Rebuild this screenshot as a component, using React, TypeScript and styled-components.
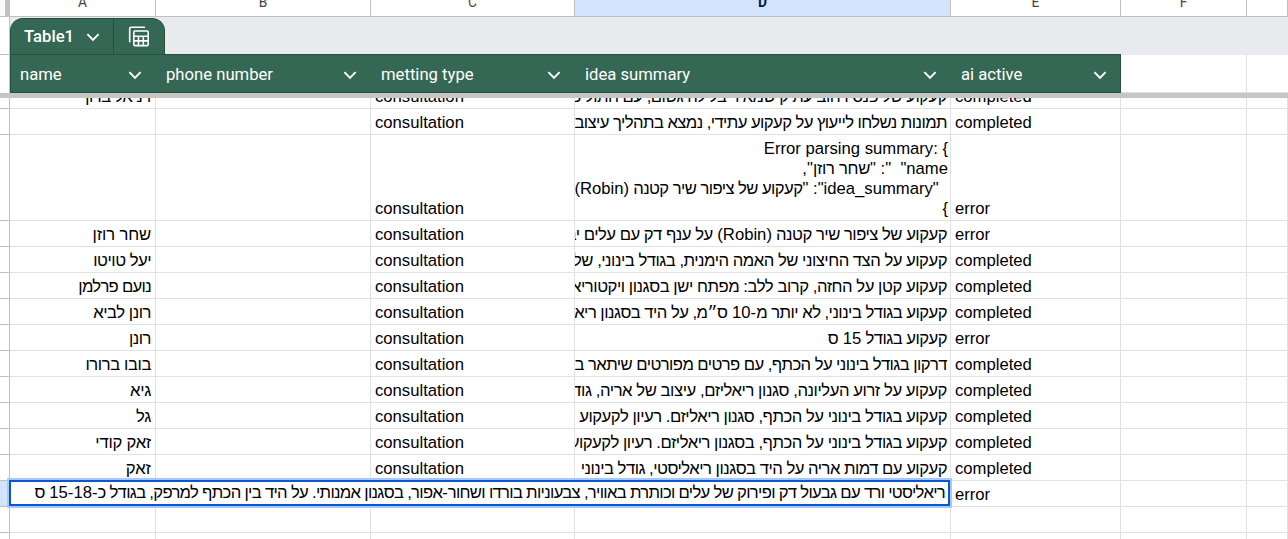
import React from 'react';
import styled, { createGlobalStyle, css } from 'styled-components';

const Global = createGlobalStyle`
  * { box-sizing: border-box; }
  html, body { margin: 0; padding: 0; overflow: hidden; background: #fff; }
`;

const COLUMNS = '146px 215px 204px 376px 170px 126px 1fr';
const cellFont = '"Liberation Sans", Arial, sans-serif';

const Sheet = styled.main`
  width: 1288px;
  height: 539px;
  overflow: hidden;
  display: flex;
  flex-direction: column;
  background: #fff;
  color: #000;
  font-family: ${cellFont};
`;

const ColumnHeads = styled.div`
  height: 17px;
  display: grid;
  grid-template-columns: 10px ${COLUMNS};
  flex: none;
`;

const Corner = styled.div`
  background: #f8f9fa;
  border-right: 5px solid #c0c0c0;
  border-bottom: 1px solid #c0c0c0;
`;

const ColumnHead = styled.div<{ $active?: boolean }>`
  border-right: 1px solid #c0c0c0;
  border-bottom: 1px solid #c0c0c0;
  background: ${p => (p.$active ? '#d3e3fd' : '#fff')};
  color: ${p => (p.$active ? '#041e49' : '#444746')};
  font: ${p => (p.$active ? 700 : 400)} 13.75px/16px Roboto, sans-serif;
  text-align: center;
  overflow: hidden;
  & > span { display: block; margin-top: -6px; }
`;

const FrozenRow = styled.div<{ $h: number }>`
  height: ${p => p.$h}px;
  display: flex;
  flex: none;
`;

const FrozenHead = styled.div<{ $ruled?: boolean }>`
  width: 10px;
  flex: none;
  border-right: 1px solid #c0c0c0;
  border-top: ${p => (p.$ruled ? '1px solid #c0c0c0' : '0')};
`;

const RowHead = styled.div<{ $active?: boolean }>`
  width: 10px;
  flex: none;
  border-right: 1px solid #c0c0c0;
  border-bottom: 1px solid #c0c0c0;
  background: ${p => (p.$active ? '#d3e3fd' : '#fff')};
`;

const TabStrip = styled.div`
  flex: 1;
  background: #e8eaed;
  padding-top: 1px;
`;

const TableTab = styled.div`
  width: 155px;
  height: 36px;
  display: flex;
  color: #fff;
  background: #356854;
  border: 1px solid #284e3f;
  border-bottom: 0;
  border-radius: 13px 13px 0 0;
`;

const TabName = styled.div`
  width: 103px;
  display: flex;
  align-items: center;
  justify-content: space-between;
  padding: 0 13px 0 13px;
  border-right: 1px solid #284e3f;
  font: 500 16.67px/20px Roboto, sans-serif;
`;

const TabTool = styled.div`
  flex: 1;
  display: flex;
  align-items: center;
  justify-content: center;
`;

const TableHeads = styled.div`
  width: 1111px;
  display: grid;
  grid-template-columns: 146px 215px 204px 376px 168px;
  color: #fff;
  background: #356854;
  border: 1px solid #284e3f;
`;

const TableHead = styled.div`
  display: flex;
  align-items: center;
  justify-content: space-between;
  padding: 2px 15px 0 9px;
  font: 450 16.67px/20px Roboto, sans-serif;
  &:last-child { padding-right: 13px; }
`;

const EmptyHead = styled.div<{ $w?: number }>`
  ${p => (p.$w ? css`width: ${p.$w}px; border-right: 1px solid #e1e1e1;` : css`flex: 1;`)}
  border-top: 1px solid #e8eaed;
  border-bottom: 1px solid #e1e1e1;
`;

const FreezeBar = styled.div`
  height: 5px;
  flex: none;
  background: #c6c6c6;
`;

const Body = styled.div`
  position: relative;
  flex: 1;
  overflow: hidden;
`;

const Row = styled.div<{ $h: number }>`
  height: ${p => p.$h}px;
  display: flex;
`;

const Cells = styled.div`
  flex: 1;
  display: grid;
  grid-template-columns: ${COLUMNS};
  min-width: 0;
`;

const Cell = styled.div<{ $rtl?: boolean }>`
  border-right: 1px solid #e1e1e1;
  border-bottom: 1px solid #e1e1e1;
  padding: 0 ${p => (p.$rtl ? 4 : 3)}px 1px 4px;
  display: flex;
  flex-direction: column;
  justify-content: flex-end;
  direction: ${p => (p.$rtl ? 'rtl' : 'ltr')};
  font-size: 16.67px;
  line-height: 20px;
  white-space: pre;
  overflow: hidden;
  min-width: 0;
`;

const IdeaCell = styled(Cell)<{ $multi?: boolean }>`
  padding-right: ${p => (p.$multi ? 2 : 3)}px;
  padding-left: 0;
`;

const Line = styled.div<{ $ltr?: boolean }>`
  direction: ${p => (p.$ltr ? 'ltr' : 'inherit')};
  text-align: ${p => (p.$ltr ? 'right' : 'start')};
`;

const Tight = styled.span<{ $track: number }>`
  letter-spacing: ${p => p.$track}px;
`;

const Editor = styled.div`
  position: absolute;
  left: 9px;
  top: 382px;
  width: 941px;
  height: 26px;
  background: #fff;
  border: 2px solid #0b57d0;
  box-shadow: 0 0 0 2px #a8c7fa;
  direction: rtl;
  padding: 1px 3px 0;
  font-size: 16.67px;
  line-height: 20px;
  white-space: pre;
`;

// Hebrew runs are set slightly tighter than Latin ones.
const Hebrew = ({ text = '', track = -0.53 }: { text?: string; track?: number }) => (
  <>
    {text.split(/([\u0590-\u05ff][\u0590-\u05ff ,.:]*)/).map((part, i) =>
      i % 2 ? <Tight key={i} $track={track}>{part}</Tight> : part
    )}
  </>
);

const Chevron = () => (
  <svg width="14" height="14" viewBox="0 0 14 14" fill="none" stroke="#fff" strokeWidth="1.9">
    <path d="M1.4 4.2 7 9.8l5.6-5.6" />
  </svg>
);

const TableIcon = () => (
  <svg width="22" height="22" viewBox="0 0 22 22" fill="none" stroke="#fff" strokeWidth="1.6">
    <path d="M1.7 16.3V2.8q0-1.5 1.5-1.5H17" />
    <rect x="5.8" y="5" width="14.4" height="14.6" rx="1.2" />
    <path d="M6 10.2h14M6 14.9h14M10.5 10.2v9.4M15.3 10.2v9.4" />
  </svg>
);

type Rec = { h?: number; name?: string; type?: string; idea?: string; status?: string; active?: boolean; nt?: number; track?: number };

const rows: Rec[] = [
  { name: 'דניאל ברוך', type: 'consultation', idea: 'קעקוע של פנס רחוב עתיק שמאיר בלילה גשום, עם חתול כתום', status: 'completed' },
  { type: 'consultation', track: -0.57, idea: 'תמונות נשלחו לייעוץ על קעקוע עתידי, נמצא בתהליך עיצוב', status: 'completed' },
  { h: 86, type: 'consultation', status: 'error' },
  { name: 'שחר רוזן', nt: -0.15, type: 'consultation', track: -0.5, idea: 'קעקוע של ציפור שיר קטנה (Robin) על ענף דק עם עלים יבשים', status: 'error' },
  { name: 'יעל טויטו', nt: -0.5, type: 'consultation', track: -0.49, idea: 'קעקוע על הצד החיצוני של האמה הימנית, בגודל בינוני, של', status: 'completed' },
  { name: 'נועם פרלמן', nt: -0.7, type: 'consultation', track: -0.46, idea: 'קעקוע קטן על החזה, קרוב ללב: מפתח ישן בסגנון ויקטוריאני', status: 'completed' },
  { name: 'רונן לביא', nt: -0.45, type: 'consultation', idea: 'קעקוע בגודל בינוני, לא יותר מ-10 ס״מ, על היד בסגנון ריאליסטי', status: 'completed' },
  { name: 'רונן', nt: -0.5, type: 'consultation', idea: 'קעקוע בגודל 15 ס', status: 'error' },
  { name: 'בובו ברורו', nt: -0.4, type: 'consultation', track: -0.57, idea: 'דרקון בגודל בינוני על הכתף, עם פרטים מפורטים שיתאר ב', status: 'completed' },
  { name: 'גיא', nt: -0.3, type: 'consultation', track: -0.44, idea: 'קעקוע על זרוע העליונה, סגנון ריאליזם, עיצוב של אריה, גודל', status: 'completed' },
  { name: 'גל', nt: -0.3, type: 'consultation', track: -0.48, idea: 'קעקוע בגודל בינוני על הכתף, סגנון ריאליזם. רעיון לקעקוע', status: 'completed' },
  { name: 'זאק קודי', nt: -0.25, type: 'consultation', track: -0.48, idea: 'קעקוע בגודל בינוני על הכתף, בסגנון ריאליזם. רעיון לקעקוע', status: 'completed' },
  { name: 'זאק', nt: 0, type: 'consultation', track: -0.51, idea: 'קעקוע עם דמות אריה על היד בסגנון ריאליסטי, גודל בינוני', status: 'completed' },
  { status: 'error', active: true },
  {},
  {},
];

const heads = ['A', 'B', 'C', 'D', 'E', 'F', ''];
const fields = ['name', 'phone number', 'metting type', 'idea summary', 'ai active'];

export default function App() {
  return (
    <Sheet>
      <Global />
      <ColumnHeads>
        <Corner />
        {heads.map((h, i) => (
          <ColumnHead key={i} $active={h === 'D'}><span>{h}</span></ColumnHead>
        ))}
      </ColumnHeads>
      <FrozenRow $h={37}>
        <FrozenHead />
        <TabStrip>
          <TableTab>
            <TabName>Table1<Chevron /></TabName>
            <TabTool><TableIcon /></TabTool>
          </TableTab>
        </TabStrip>
      </FrozenRow>
      <FrozenRow $h={39}>
        <FrozenHead $ruled />
        <TableHeads>
          {fields.map(f => <TableHead key={f}>{f}<Chevron /></TableHead>)}
        </TableHeads>
        <EmptyHead $w={126} />
        <EmptyHead />
      </FrozenRow>
      <FreezeBar />
      <Body>
        {rows.map((r, i) => (
          <Row key={i} $h={i === 0 ? 11 : r.h ?? 26}>
            <RowHead $active={r.active} />
            <Cells>
              <Cell $rtl><Line><Hebrew text={r.name} track={r.nt} /></Line></Cell>
              <Cell />
              <Cell><Line>{r.type}</Line></Cell>
              <IdeaCell $rtl $multi={!!r.h}>
                {r.h ? (
                  <>
                    <Line $ltr>{'Error parsing summary: {'}</Line>
                    <Line><Hebrew text={'name"  ": "שחר רוזן",'} track={-0.3} /></Line>
                    <Line><Hebrew text={'  "idea_summary": "קעקוע של ציפור שיר קטנה (Robin)'} track={-0.57} /></Line>
                    <Line>{'}'}</Line>
                  </>
                ) : <Line><Hebrew text={r.idea} track={r.track} /></Line>}
              </IdeaCell>
              <Cell><Line>{r.status}</Line></Cell>
              <Cell />
              <Cell />
            </Cells>
          </Row>
        ))}
        <Editor>
          <Hebrew track={-0.69} text="ריאליסטי ורד עם גבעול דק ופירוק של עלים וכותרת באוויר, צבעוניות בורדו ושחור-אפור, בסגנון אמנותי. על היד בין הכתף למרפק, בגודל כ-15-18 ס" />
        </Editor>
      </Body>
    </Sheet>
  );
}
